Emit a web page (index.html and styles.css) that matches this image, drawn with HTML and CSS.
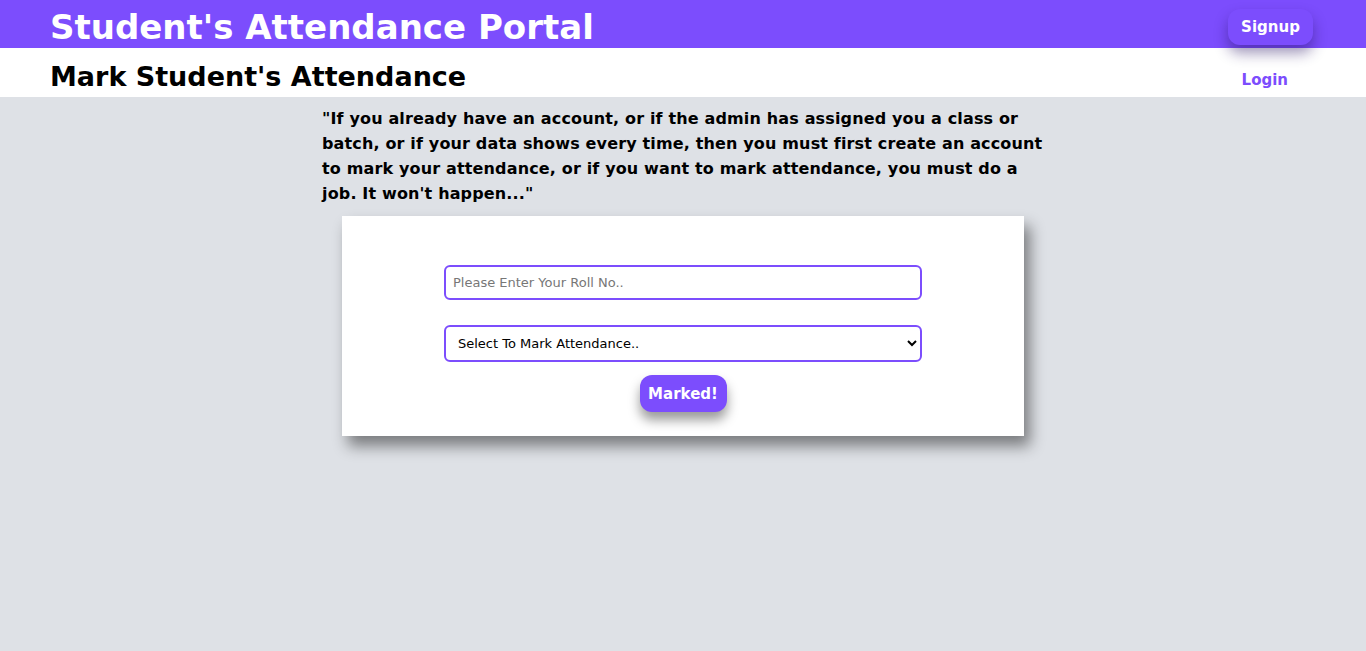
FILE: index.html
```html
<!DOCTYPE html>
<html lang="en">
<head>
<meta charset="utf-8">
<title>Student's Attendance Portal</title>
<link rel="stylesheet" href="styles.css">
</head>
<body>
<header class="topbar">
  <h1 class="brand">Student's Attendance Portal</h1>
  <button class="signup">Signup</button>
</header>
<div class="subbar">
  <h2 class="page-title">Mark Student's Attendance</h2>
  <a class="login" href="#">Login</a>
</div>
<main class="content">
  <p class="notice">"If you already have an account, or if the admin has assigned you a class or<br>batch, or if your data shows every time, then you must first create an account<br>to mark your attendance, or if you want to mark attendance, you must do a<br>job. It won't happen..."</p>
  <form class="card">
    <input class="field" type="text" placeholder="Please Enter Your Roll No..">
    <select class="field select">
      <option>Select To Mark Attendance..</option>
    </select>
    <button class="mark" type="button">Marked!</button>
  </form>
</main>
</body>
</html>
```
FILE: styles.css
```css
* { box-sizing: border-box; }
html, body { margin: 0; padding: 0; }
body {
  background: #dee1e6;
  font-family: "DejaVu Sans", sans-serif;
  min-height: 651px;
}
.topbar {
  background: #7c4dfd;
  height: 48px;
  display: flex;
  align-items: center;
  justify-content: space-between;
  padding: 0 53px 0 50px;
}
.brand {
  margin: 0;
  color: #fff;
  font-size: 34px;
  font-weight: bold;
  line-height: 48px;
  padding-top: 5px;
  white-space: nowrap;
}
.signup {
  background: #7c4dfd;
  color: #fff;
  border: none;
  border-radius: 12px;
  font-family: inherit;
  font-weight: bold;
  font-size: 15px;
  width: 85px;
  height: 36px;
  margin-top: 6px;
  box-shadow: 0 8px 14px rgba(40, 20, 100, 0.45);
}
.subbar {
  background: #fff;
  height: 49px;
  display: flex;
  align-items: center;
  justify-content: space-between;
  padding: 0 78px 0 50px;
}
.page-title {
  margin: 0;
  font-size: 27px;
  font-weight: bold;
  color: #000;
  padding-top: 7px;
  white-space: nowrap;
}
.login {
  color: #7c4dfd;
  font-weight: bold;
  font-size: 15px;
  text-decoration: none;
  padding-top: 14px;
}
.content {
  display: flex;
  flex-direction: column;
  align-items: center;
}
.notice {
  margin: 9px 0 0 5px;
  width: 727px;
  font-size: 16px;
  font-weight: bold;
  line-height: 25px;
  letter-spacing: 0.15px;
  white-space: nowrap;
  color: #000;
}
.card {
  margin-top: 10px;
  width: 682px;
  height: 220px;
  background: #fff;
  display: flex;
  flex-direction: column;
  align-items: center;
  padding-top: 49px;
  box-shadow: 6px 10px 14px rgba(0, 0, 0, 0.45);
}
.field {
  width: 478px;
  height: 35px;
  border: 2px solid #7c4dfd;
  border-radius: 6px;
  font-family: inherit;
  font-size: 13px;
  padding: 0 7px;
  background: #fff;
  color: #000;
}
.field::placeholder { color: #777; }
.select {
  margin-top: 25px;
  height: 37px;
  padding: 0 8px;
}
.mark {
  margin-top: 13px;
  width: 87px;
  height: 37px;
  background: #7c4dfd;
  color: #fff;
  border: none;
  border-radius: 12px;
  font-family: inherit;
  font-weight: bold;
  font-size: 15px;
  box-shadow: 0 8px 12px rgba(0, 0, 0, 0.4);
}
```
